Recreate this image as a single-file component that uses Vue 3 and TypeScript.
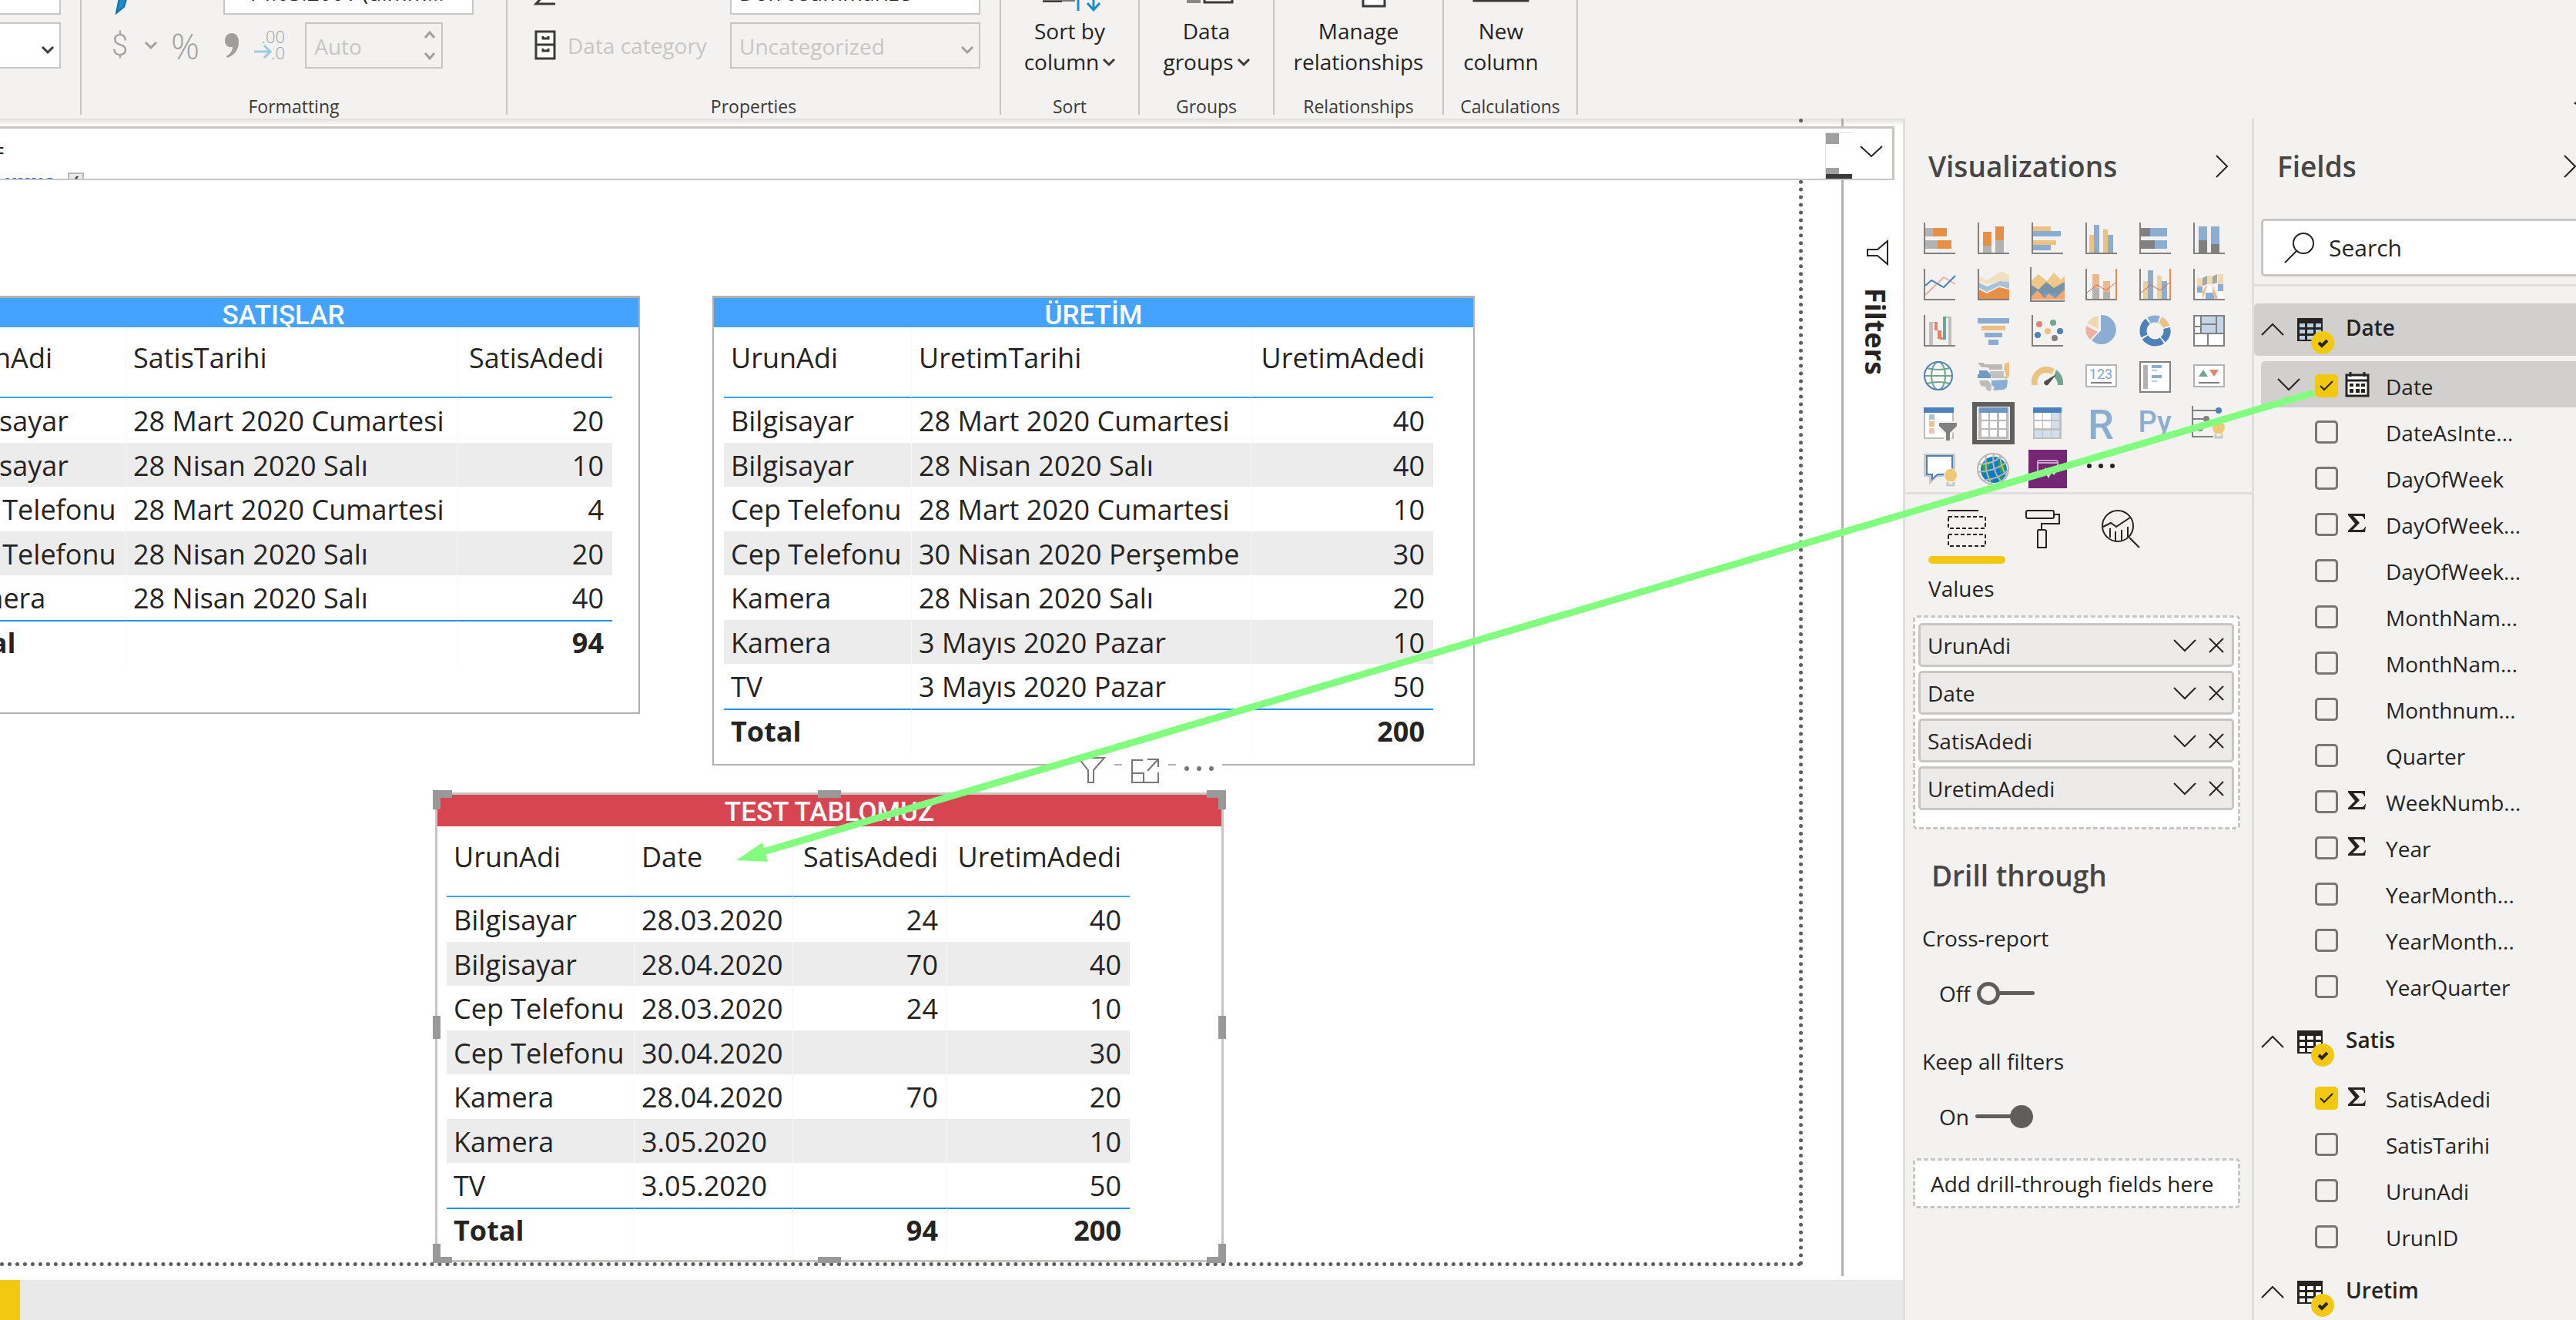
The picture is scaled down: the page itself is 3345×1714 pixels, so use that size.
<script setup lang="ts">
import { ref } from 'vue'

interface Visual {
  name: string
  art: string
  selected?: boolean
}
interface Field {
  name: string
  checked?: boolean
  sum?: boolean
  date?: boolean
}
interface FieldTable {
  name: string
  active?: boolean
  fields: Field[]
}
interface Card {
  id: string
  title: string
  tone: string
  selected?: boolean
  columns: { name: string; width: number; number?: boolean }[]
  rows: string[][]
  total: string[]
}

const axis = '<path d="M1 0V40H41" fill="none" stroke="#808080" stroke-width="2"/>'
const r = (x: number, y: number, w: number, h: number, c: string) =>
  `<rect x="${x}" y="${y}" width="${w}" height="${h}" fill="${c}"/>`
const p = (points: string, c: string) => `<polygon points="${points}" fill="${c}"/>`
const line = (points: string, c: string, w = 2) =>
  `<polyline points="${points}" fill="none" stroke="${c}" stroke-width="${w}"/>`
const dot = (x: number, y: number, c: string, radius = 4) =>
  `<circle cx="${x}" cy="${y}" r="${radius}" fill="${c}"/>`

const orange = '#e68f45'
const yellow = '#ebc282'
const blue = '#8badd2'
const deep = '#4c81b9'
const gray = '#b3b3b3'
const dark = '#808080'
const red = '#e0846e'
const green = '#72a591'

const arc = (from: number, to: number, c: string) => {
  const pt = (a: number, rad: number) => {
    const t = ((a - 90) * Math.PI) / 180
    return `${(20.5 + rad * Math.cos(t)).toFixed(1)} ${(20.5 + rad * Math.sin(t)).toFixed(1)}`
  }
  return `<path d="M${pt(from, 20)}A20 20 0 0 1 ${pt(to, 20)}L${pt(to, 11)}A11 11 0 0 0 ${pt(from, 11)}Z" fill="${c}"/>`
}
const bulb = (x: number, y: number) =>
  `<circle cx="${x}" cy="${y}" r="9" fill="#f3f2f1"/><path d="M${x - 8} ${y}a8 8 0 1 1 16 0c0 4-3 5-3 8h-10c0-3-3-4-3-8z" fill="#eec976"/><path d="M${x - 4} ${y + 9}v4h8v-4" fill="none" stroke="#c8c8c8" stroke-width="3"/>`

const visuals: Visual[] = [
  { name: 'Stacked bar chart', art: r(2, 7, 10, 11, gray) + r(12, 7, 18, 11, orange) + r(2, 23, 16, 11, gray) + r(18, 23, 18, 11, orange) + axis },
  { name: 'Stacked column chart', art: r(7, 12, 11, 18, orange) + r(7, 30, 11, 9, gray) + r(23, 5, 11, 18, orange) + r(23, 23, 11, 16, gray) + axis },
  { name: 'Clustered bar chart', art: r(2, 5, 23, 6, yellow) + r(2, 11, 36, 7, blue) + r(2, 23, 30, 6, yellow) + r(2, 29, 23, 7, blue) + axis },
  { name: 'Clustered column chart', art: r(5, 16, 6, 23, yellow) + r(11, 3, 7, 36, blue) + r(23, 9, 6, 30, yellow) + r(29, 16, 7, 23, blue) + axis },
  { name: '100% stacked bar chart', art: r(2, 7, 12, 11, dark) + r(14, 7, 22, 11, blue) + r(2, 23, 18, 11, dark) + r(20, 23, 16, 11, blue) + axis },
  { name: '100% stacked column chart', art: r(7, 5, 11, 18, blue) + r(7, 23, 11, 16, dark) + r(23, 5, 11, 23, blue) + r(23, 28, 11, 11, dark) + axis },
  { name: 'Line chart', art: line('2,34 26,11 41,20', '#ebafa2') + line('2,22 10,15 26,24 41,9', deep) + axis },
  { name: 'Area chart', art: p('2,10 12,15 31,3 41,8 41,18 31,16 12,20 2,16', '#f2dfc0') + p('2,18 12,23 29,16 41,17 41,26 29,22 12,30 2,25', '#a5c3d6') + p('2,27 12,32 28,24 41,27 41,39 2,39', orange) + axis },
  { name: 'Stacked area chart', art: p('0,15 9,7 20,16 29,5 38,14 43,9 43,30 0,30', '#f0c785') + p('0,21 9,27 19,17 29,25 43,17 43,38 0,38', '#7592ab') + p('14,32 34,32 29,38 20,38', '#739bc8') + p('0,40 0,36 8,28 17,38 22,32 31,38 43,27 43,40', '#f2a86c') + '<path d="M-1-2V42H43" fill="none" stroke="#808080" stroke-width="2"/>' },
  { name: 'Line and stacked column chart', art: r(9, 7, 9, 18, '#efb78e') + r(9, 25, 9, 14, gray) + r(23, 16, 9, 14, '#efb78e') + r(23, 30, 9, 9, gray) + line('2,31 15,21 27,28 39,18', '#dd6245', 1) + axis + r(39, 0, 2, 40, orange) },
  { name: 'Line and clustered column chart', art: r(5, 16, 6, 23, '#ebcf9c') + r(11, 2, 7, 37, blue) + r(23, 9, 6, 30, '#ebcf9c') + r(29, 16, 7, 23, blue) + line('2,31 15,21 27,28 39,18', '#dd6245', 1) + axis + r(39, 0, 2, 40, orange) },
  { name: 'Ribbon chart', art: r(5, 12, 7, 11, '#f2d9b0') + r(5, 23, 7, 8, blue) + r(5, 31, 7, 8, '#fff') + p('12,12 18,9 18,20 12,22', '#a6a6a6') + r(18, 9, 7, 11, '#f2d9b0') + r(18, 22, 7, 9, '#fff') + p('12,31 16,22 18,22 12,39', '#efb78e') + r(16, 31, 11, 8, blue) + p('25,22 31,36 31,39 28,39 25,30', '#efb78e') + p('25,10 31,7 31,18 25,20', '#a6a6a6') + r(32, 7, 7, 13, '#f2d9b0') + r(32, 20, 7, 9, blue) + r(32, 29, 7, 10, '#fff') + axis },
  { name: 'Waterfall chart', art: r(7, 9, 5, 30, '#c0c0c0') + r(12, 9, 2, 1, '#c0c0c0') + r(14, 9, 4, 11, red) + r(18, 20, 5, 11, red) + r(21, 29, 4, 3, red) + r(25, 2, 4, 30, green) + r(29, 2, 3, 2, '#c0c0c0') + r(32, 2, 4, 37, '#c0c0c0') + axis },
  { name: 'Funnel', art: r(0, 4, 41, 7, blue) + r(5, 14, 31, 6, yellow) + r(9, 23, 23, 6, blue) + r(14, 32, 13, 7, blue) },
  { name: 'Scatter chart', art: dot(10, 12, red) + dot(28, 10, green) + dot(8, 26, deep) + dot(21, 21, yellow) + dot(37, 21, deep) + dot(30, 30, dark) + axis },
  { name: 'Pie chart', art: `<path d="M20 0a19 19 0 1 1-12 33L20 20z" fill="${blue}"/><path d="M17 1v17L2 11A19 19 0 0 1 17 1z" fill="#efd9b2"/><path d="M1 14l15 8L6 32A19 19 0 0 1 1 14z" fill="#ebb1a3"/>` },
  { name: 'Donut chart', art: arc(-30, 18, blue) + arc(25, 70, yellow) + arc(77, 138, deep) + arc(145, 237, deep) + arc(244, 322, deep) },
  { name: 'Treemap', art: r(0, 0, 41, 41, '#fff') + r(10, 1, 30, 22, '#c4d5e8') + '<path d="M1 1H40V40H1zM10 1V23M1 15H10M10 12H30M30 1V23M1 24H40M19 24V40" fill="none" stroke="#808080" stroke-width="2"/>' },
  { name: 'Map', art: `<circle cx="19" cy="19" r="18" fill="#fff" fill-opacity=".5"/><g fill="none" stroke="${green}" stroke-width="2"><ellipse cx="19" cy="19" rx="9" ry="18"/><path d="M1 19H37M4 9q15 4 30 0M4 29q15-4 30 0"/></g><circle cx="19" cy="19" r="18" fill="none" stroke="${deep}" stroke-width="2"/>` },
  { name: 'Filled map', art: p('0,2 8,2 8,4 32,4 32,11 16,11 13,8 5,8', '#b9b9b9') + p('2,12 12,12 17,17 17,22 0,22 0,17 2,17', '#7299c6') + p('16,13 34,13 34,22 19,22 16,17', '#c0c0c0') + p('35,3 41,1 41,20 36,24 34,20 37,19 34,10', '#ebc282') + p('2,25 14,25 18,32 17,39 12,38 10,33 4,32', '#bdbdbd') + p('18,25 39,24 38,34 34,37 20,38 22,34 18,31', blue) },
  { name: 'Gauge', art: `<path d="M0 31A20 20 0 0 1 30 10l-4 7A12 12 0 0 0 8 31z" fill="${yellow}"/><path d="M32 11A22 22 0 0 1 41 31h-7q0-6-5-11z" fill="${green}"/><path d="M32 17L22 30a3 3 0 1 1-5-4z" fill="#4d4d4d"/>` },
  { name: 'Card', art: '<rect x="1" y="5" width="39" height="28" fill="#fff" stroke="#b3b3b3" stroke-width="2"/><text x="20" y="23" text-anchor="middle" font-size="18" fill="#7fa8d2">123</text>' + r(7, 27, 27, 2, dark) },
  { name: 'Multi-row card', art: '<rect x="1" y="1" width="39" height="39" fill="#fff" stroke="#808080" stroke-width="2"/>' + r(5, 5, 6, 31, gray) + r(16, 5, 13, 4, blue) + r(16, 11, 7, 2, '#c8c8c8') + r(16, 18, 13, 4, blue) + r(16, 25, 7, 2, '#c8c8c8') },
  { name: 'KPI', art: '<rect x="1" y="5" width="39" height="28" fill="#fff" stroke="#b3b3b3" stroke-width="2"/>' + p('7,20 13,11 19,20', green) + p('21,11 33,11 27,20', red) + r(7, 27, 27, 2, dark) },
  { name: 'Slicer', art: '<rect x="1" y="1" width="37" height="39" fill="#fff" stroke="#bdbdbd" stroke-width="2"/>' + r(0, 0, 39, 7, deep) + r(7, 9, 7, 7, '#a8c1dc') + r(7, 18, 7, 7, yellow) + r(7, 27, 7, 7, '#efc3b8') + p('18,18 46,18 46,24 36,35 36,44 26,44 26,35 18,26', '#f3f2f1') + p('20,20 43,20 43,24 34,33 34,43 29,43 29,33 20,24', dark) },
  { name: 'Table', selected: true, art: r(2, 0, 37, 41, '#b9b9b9') + r(2, 0, 37, 7, '#6f95c2') + [7, 18, 29].map((y) => [5, 16, 28].map((x) => r(x, y, 9, 9, '#fff')).join('')).join('') },
  { name: 'Matrix', art: r(2, 0, 37, 41, '#c0c0c0') + r(2, 0, 37, 7, deep) + [7, 18, 30].map((y, i) => [4, 15, 26].map((x, j) => r(x, y, 10, 9, i === 2 || j === 2 ? '#d2dfec' : '#fff')).join('')).join('') },
  { name: 'R script visual', art: `<text x="20" y="41" text-anchor="middle" font-size="54" font-weight="500" fill="${blue}">R</text>` },
  { name: 'Python visual', art: `<text x="20" y="32" text-anchor="middle" font-size="38" font-weight="500" fill="${blue}">Py</text>` },
  { name: 'Key influencers', art: '<path d="M-1-2V38H26M0 4H31M0 15H16M0 27H8" fill="none" stroke="#808080" stroke-width="2"/>' + dot(33, 4, deep) + dot(17, 15, dark) + dot(9, 27, dark) + bulb(33, 26) },
  { name: 'Q&A', art: '<path d="M2 2H39V28H17L9 36V28H2z" fill="#fff" stroke="#c8c8c8" stroke-width="4"/><path d="M4 3H37V27H18L11 33V27H4z" fill="#fff" stroke="#4c81b9" stroke-width="2"/>' + bulb(35, 28) },
  { name: 'ArcGIS Maps', art: '<circle cx="21" cy="21" r="17" fill="#0c79c9"/><path d="M6 15q8-9 11-4l-3 8-7 9zM27 8q10 4 9 14l-6 3-4-9zM14 27l7 9-8-1zM26 31l8-2-6 7z" fill="#2fa33f"/><g fill="none" stroke="#b5b5b5" stroke-width="2"><circle cx="20" cy="20" r="20"/><path d="M1 14Q20 14 31 3M1 24Q24 22 38 11M7 35Q28 33 40 21M11 2Q8 22 18 40M21 0Q17 20 31 37M29 2Q30 18 38 30"/></g>' },
  { name: 'Power Apps', art: r(-4, -5, 50, 50, '#742774') + '<path d="M8 24V11Q8 9 10 9H32Q34 9 34 11V22M8 12H34" fill="none" stroke="#c9a3c9" stroke-width="2"/><path d="M14 28l4-7 4 8 4-8 4 6" fill="none" stroke="#ead5ea" stroke-width="3"/>' },
  { name: 'Get more visuals', art: dot(5, 16, '#252423', 3) + dot(20, 16, '#252423', 3) + dot(35, 16, '#252423', 3) },
]

const wells = ref(['UrunAdi', 'Date', 'SatisAdedi', 'UretimAdedi'])
const crossReport = ref(false)
const keepFilters = ref(true)

const tables = ref<FieldTable[]>([
  {
    name: 'Date',
    active: true,
    fields: [
      { name: 'Date', checked: true, date: true },
      { name: 'DateAsInte...' },
      { name: 'DayOfWeek' },
      { name: 'DayOfWeek...', sum: true },
      { name: 'DayOfWeek...' },
      { name: 'MonthNam...' },
      { name: 'MonthNam...' },
      { name: 'Monthnum...' },
      { name: 'Quarter' },
      { name: 'WeekNumb...', sum: true },
      { name: 'Year', sum: true },
      { name: 'YearMonth...' },
      { name: 'YearMonth...' },
      { name: 'YearQuarter' },
    ],
  },
  {
    name: 'Satis',
    fields: [{ name: 'SatisAdedi', checked: true, sum: true }, { name: 'SatisTarihi' }, { name: 'UrunAdi' }, { name: 'UrunID' }],
  },
  { name: 'Uretim', fields: [] },
])

const cards: Card[] = [
  {
    id: 'satis',
    title: 'SATIŞLAR',
    tone: 'blue',
    columns: [
      { name: 'UrunAdi', width: 244 },
      { name: 'SatisTarihi', width: 431 },
      { name: 'SatisAdedi', width: 200, number: true },
    ],
    rows: [
      ['Bilgisayar', '28 Mart 2020 Cumartesi', '20'],
      ['Bilgisayar', '28 Nisan 2020 Salı', '10'],
      ['Cep Telefonu', '28 Mart 2020 Cumartesi', '4'],
      ['Cep Telefonu', '28 Nisan 2020 Salı', '20'],
      ['Kamera', '28 Nisan 2020 Salı', '40'],
    ],
    total: ['Total', '', '94'],
  },
  {
    id: 'uretim',
    title: 'ÜRETİM',
    tone: 'blue',
    columns: [
      { name: 'UrunAdi', width: 244 },
      { name: 'UretimTarihi', width: 441 },
      { name: 'UretimAdedi', width: 236, number: true },
    ],
    rows: [
      ['Bilgisayar', '28 Mart 2020 Cumartesi', '40'],
      ['Bilgisayar', '28 Nisan 2020 Salı', '40'],
      ['Cep Telefonu', '28 Mart 2020 Cumartesi', '10'],
      ['Cep Telefonu', '30 Nisan 2020 Perşembe', '30'],
      ['Kamera', '28 Nisan 2020 Salı', '20'],
      ['Kamera', '3 Mayıs 2020 Pazar', '10'],
      ['TV', '3 Mayıs 2020 Pazar', '50'],
    ],
    total: ['Total', '', '200'],
  },
  {
    id: 'test',
    title: 'TEST TABLOMUZ',
    tone: 'red',
    selected: true,
    columns: [
      { name: 'UrunAdi', width: 244 },
      { name: 'Date', width: 206 },
      { name: 'SatisAdedi', width: 200, number: true },
      { name: 'UretimAdedi', width: 237, number: true },
    ],
    rows: [
      ['Bilgisayar', '28.03.2020', '24', '40'],
      ['Bilgisayar', '28.04.2020', '70', '40'],
      ['Cep Telefonu', '28.03.2020', '24', '10'],
      ['Cep Telefonu', '30.04.2020', '', '30'],
      ['Kamera', '28.04.2020', '70', '20'],
      ['Kamera', '3.05.2020', '', '10'],
      ['TV', '3.05.2020', '', '50'],
    ],
    total: ['Total', '', '94', '200'],
  },
]
const handles = ['tl', 'tm', 'tr', 'ml', 'mr', 'bl', 'bm', 'br']
</script>

<template>
  <div class="app">
    <header class="ribbon">
      <section class="group structure">
        <div class="controls">
          <div class="pick"><select aria-label="Name"><option></option></select></div>
          <div class="pick">
            <select aria-label="Data type"><option></option></select>
            <svg class="caret" viewBox="0 0 16 10"><path d="M1 1l7 7 7-7" /></svg>
          </div>
        </div>
      </section>

      <section class="group formatting">
        <div class="controls">
          <div class="row">
            <svg class="brush" viewBox="0 0 26 60"><path d="M6 58L10 38 22 30 16 50Z" fill="#1e8bcd" stroke="#126fa8" stroke-width="2" /></svg>
            <label class="cap format-cap" for="format">Format</label>
            <div class="pick"><select id="format"><option>14.03.2001 (d.mm...</option></select></div>
          </div>
          <div class="row">
            <button class="glyph money" disabled>
              $<svg class="caret-sm" viewBox="0 0 16 10"><path d="M1 1l7 7 7-7" /></svg>
            </button>
            <button class="glyph percent" disabled>%</button>
            <button class="glyph comma" disabled aria-label="Thousands separator">
              <svg viewBox="0 0 20 34"><path d="M10 1c6 0 9 5 9 12 0 10-6 17-15 20l-1-2c5-3 8-7 8-12C4 20 1 16 1 10 1 5 5 1 10 1z" fill="#a19f9d" /></svg>
            </button>
            <button class="glyph decimals" disabled aria-label="Decimal places">
              <svg viewBox="0 0 40 42">
                <text x="40" y="18" text-anchor="end" font-size="22" fill="#a19f9d">.00</text>
                <text x="40" y="39" text-anchor="end" font-size="22" fill="#a19f9d">.0</text>
                <path d="M0 29H20M13 21l8 8-8 8" fill="none" stroke="#9ccae3" stroke-width="3" />
              </svg>
            </button>
            <div class="stepper">
              <input type="text" value="Auto" disabled aria-label="Decimals" />
              <svg viewBox="0 0 16 38"><path d="M2 9l6-7 6 7M2 29l6 7 6-7" /></svg>
            </div>
          </div>
        </div>
        <h2>Formatting</h2>
      </section>

      <section class="group properties">
        <div class="controls">
          <div class="row">
            <svg class="prop-icon" viewBox="0 0 28 60"><path d="M26 17H3l11 16L2 46H27" fill="#fff" stroke="#3b3a39" stroke-width="3" /></svg>
            <label class="cap" for="summary">Summarization</label>
            <div class="pick"><select id="summary"><option>Don't summarize</option></select></div>
          </div>
          <div class="row">
            <svg class="prop-icon" viewBox="0 0 28 60"><path d="M2 12H26V47H2zM2 29H26" fill="#fff" stroke="#3b3a39" stroke-width="3" /><path d="M11 18v3h7v-3M11 34v3h7v-3" fill="none" stroke="#3b3a39" stroke-width="3" /></svg>
            <label class="cap off" for="category">Data category</label>
            <div class="pick">
              <select id="category" disabled><option>Uncategorized</option></select>
              <svg class="caret" viewBox="0 0 16 10"><path d="M1 1l7 7 7-7" /></svg>
            </div>
          </div>
        </div>
        <h2>Properties</h2>
      </section>

      <section class="group sort">
        <button class="big">
          <svg viewBox="0 0 80 80"><path d="M5 0H47V66H5z" fill="#797775" /><path d="M5 66H30" stroke="#3b3a39" stroke-width="2" /><path d="M51 20V78M71 20V76M63 68l8 9 8-9" fill="none" stroke="#1e8bcd" stroke-width="3" /></svg>
          <span>Sort by<br />column<svg class="caret-lg" viewBox="0 0 16 10"><path d="M1 1l7 7 7-7" /></svg></span>
        </button>
        <h2>Sort</h2>
      </section>
      <section class="group groups">
        <button class="big">
          <svg viewBox="0 0 80 80"><path d="M15 30H33V68H15z" fill="#8a8886" /><path d="M38 30H74V67H38z" fill="#fff" stroke="#3b3a39" stroke-width="3" /></svg>
          <span>Data<br />groups<svg class="caret-lg" viewBox="0 0 16 10"><path d="M1 1l7 7 7-7" /></svg></span>
        </button>
        <h2>Groups</h2>
      </section>
      <section class="group relations">
        <button class="big">
          <svg viewBox="0 0 80 80"><path d="M46 40H74V72H46z" fill="#fff" stroke="#3b3a39" stroke-width="3" /></svg>
          <span>Manage<br />relationships</span>
        </button>
        <h2>Relationships</h2>
      </section>
      <section class="group calc">
        <button class="big">
          <svg viewBox="0 0 80 80"><path d="M5 20H75V65H5z" fill="#fff" stroke="#3b3a39" stroke-width="3" /></svg>
          <span>New<br />column</span>
        </button>
        <h2>Calculations</h2>
      </section>
      <svg class="ribbon-more" viewBox="0 0 3 6"><path d="M3 1L0 3l3 2z" fill="#252423" /></svg>
    </header>

    <div class="body">
      <main class="report">
        <div class="workspace">
          <div class="canvas">
            <article v-for="card in cards" :key="card.id" class="card" :class="[card.id, card.tone, { selected: card.selected }]">
              <h3>{{ card.title }}</h3>
              <table>
                <colgroup>
                  <col v-for="c in card.columns" :key="c.name" :style="{ width: c.width + 'px' }" />
                </colgroup>
                <thead>
                  <tr><th v-for="c in card.columns" :key="c.name" :class="{ num: c.number }">{{ c.name }}</th></tr>
                </thead>
                <tbody>
                  <tr v-for="(row, i) in card.rows" :key="i">
                    <td v-for="(cell, j) in row" :key="j" :class="{ num: card.columns[j].number }">{{ cell }}</td>
                  </tr>
                </tbody>
                <tfoot>
                  <tr><td v-for="(cell, j) in card.total" :key="j" :class="{ num: card.columns[j].number }">{{ cell }}</td></tr>
                </tfoot>
              </table>
              <template v-if="card.selected">
                <i v-for="h in handles" :key="h" class="handle" :class="h"></i>
                <div class="tools">
                  <button aria-label="Filters"><svg viewBox="0 0 36 34"><path d="M1 1H35L21 17V33H14V17Z" /></svg></button>
                  <button aria-label="Focus mode"><svg viewBox="0 0 36 34"><path d="M15 4H1V33H35V20M1 21H16V33M21 3H35V13M34 4L21 18" /></svg></button>
                  <button aria-label="More options"><svg viewBox="0 0 36 34"><g class="fill"><circle cx="2" cy="15" r="3" /><circle cx="18" cy="15" r="3" /><circle cx="34" cy="15" r="3" /></g></svg></button>
                </div>
              </template>
            </article>
          </div>
          <aside class="filters">
            <svg viewBox="0 0 30 32"><path d="M28 1V31L15 20H2V12H15Z" /></svg>
            <h2>Filters</h2>
          </aside>
        </div>
        <footer class="pages"><span class="page-mark"></span></footer>

        <div class="formula">
          <pre><code>Date =
<b>ADDCOLUMNS</b> <i>(</i></code></pre>
          <div class="minimap"><i></i><i></i></div>
          <button aria-label="Expand formula bar"><svg viewBox="0 0 30 16"><path d="M1 1l14 13L29 1" /></svg></button>
        </div>
      </main>

      <aside class="viz">
        <div class="pane-head">
          <h2>Visualizations</h2>
          <button aria-label="Collapse Visualizations"><svg viewBox="0 0 16 30"><path d="M1 1l14 14L1 29" /></svg></button>
        </div>
        <div class="gallery">
          <button v-for="v in visuals" :key="v.name" :aria-label="v.name" :class="{ on: v.selected }">
            <svg viewBox="0 0 41 41" v-html="v.art"></svg>
          </button>
        </div>
        <nav class="tabs">
          <button class="on" aria-label="Fields"><svg viewBox="0 0 50 50"><path d="M0 1H40" /><path d="M1 9H49V24H1ZM1 32H49V47H1Z" stroke-dasharray="5 3" /></svg></button>
          <button aria-label="Format"><svg viewBox="0 0 50 50"><path d="M4 1H36Q38 1 38 3V9Q38 11 36 11H4Q2 11 2 9V3Q2 1 4 1ZM38 6H45V18H22V26M18 26H26Q28 26 28 28V49H17V28Q17 26 18 26Z" /></svg></button>
          <button aria-label="Analytics"><svg viewBox="0 0 50 50"><circle cx="21" cy="21" r="20" /><path d="M2 22L12 17 19 22 37 10M11 24V36M18 28V40M26 26V40M34 22V35M36 36L49 49" /></svg></button>
        </nav>

        <h3 class="well-name">Values</h3>
        <div class="well">
          <div v-for="w in wells" :key="w" class="chip">
            <span>{{ w }}</span>
            <button :aria-label="'Options for ' + w"><svg class="down" viewBox="0 0 30 16"><path d="M1 1l14 14L29 1" /></svg></button>
            <button :aria-label="'Remove ' + w"><svg class="cross" viewBox="0 0 20 20"><path d="M1 1l18 18M19 1L1 19" /></svg></button>
          </div>
        </div>

        <h2 class="drill">Drill through</h2>
        <label class="switch-name" for="cross">Cross-report</label>
        <div class="switch"><span>{{ crossReport ? 'On' : 'Off' }}</span><input id="cross" v-model="crossReport" type="checkbox" role="switch" /></div>
        <label class="switch-name keep" for="keep">Keep all filters</label>
        <div class="switch"><span>{{ keepFilters ? 'On' : 'Off' }}</span><input id="keep" v-model="keepFilters" type="checkbox" role="switch" /></div>
        <div class="drop">Add drill-through fields here</div>
      </aside>

      <aside class="fields">
        <div class="pane-head">
          <h2>Fields</h2>
          <button aria-label="Collapse Fields"><svg viewBox="0 0 16 30"><path d="M1 1l14 14L1 29" /></svg></button>
        </div>
        <div class="search">
          <svg viewBox="0 0 40 40"><circle cx="25" cy="14" r="13" /><path d="M16 24L1 39" /></svg>
          <input type="search" placeholder="Search" aria-label="Search" />
        </div>
        <section v-for="t in tables" :key="t.name" class="ftable" :class="{ active: t.active }">
          <button class="fhead">
            <svg class="fold" viewBox="0 0 30 16"><path d="M1 15L15 1l14 14" /></svg>
            <svg class="ticon" viewBox="0 0 48 48">
              <path d="M0 0H33V30H0z" fill="#252423" />
              <path class="cells" d="M3 7h7v5H3zM13 7h8v5h-8zM24 7h7v5h-7zM3 15h7v5H3zM13 15h8v5h-8zM24 15h7v5h-7zM3 23h7v5H3zM13 23h8v5h-8zM24 23h7v5h-7z" />
              <circle cx="33" cy="32" r="15" fill="#f2c811" />
              <path d="M28 32l4 4 7-7" fill="none" stroke="#252423" stroke-width="4" />
            </svg>
            <span>{{ t.name }}</span>
          </button>
          <label v-for="(f, i) in t.fields" :key="i" class="field" :class="{ hot: f.date }">
            <span class="unfold"><svg v-if="f.date" viewBox="0 0 30 16"><path d="M1 1l14 14L29 1" /></svg></span>
            <span class="tick">
              <input v-model="f.checked" type="checkbox" />
              <svg v-if="f.checked" viewBox="0 0 30 30"><path d="M7 15l5 5L23 9" /></svg>
            </span>
            <span class="kind">
              <svg v-if="f.sum" viewBox="0 0 30 32"><path d="M3 4H25V11H24Q23 7 20 7H10L18 16 9 25H20Q24 25 25 21H26L25 28H3V26L12 17 3 6Z" fill="#252423" /></svg>
              <svg v-if="f.date" viewBox="0 0 30 32"><path d="M1 4H29V31H1z" fill="#fff" stroke="#252423" stroke-width="3" /><path d="M0 11H30M6 0V6M24 0V6" stroke="#252423" stroke-width="3" /><path d="M5 15h5v4H5zM13 15h5v4h-5zM20 15h5v4h-5zM5 22h5v5H5zM13 22h5v5h-5zM20 22h5v5h-5z" fill="#252423" /></svg>
            </span>
            <span>{{ f.name }}</span>
          </label>
        </section>
      </aside>
    </div>

    <svg class="arrow" viewBox="0 0 2060 620" aria-hidden="true">
      <path d="M2051 6L38 602" />
      <polygon points="6,612 40,589 47,614" />
    </svg>
  </div>
</template>

<style>
body {
  overflow: hidden;
}
</style>

<style scoped>
.app {
  position: relative;
  display: flex;
  flex-direction: column;
  min-height: 100vh;
  overflow: hidden;
  background: #f3f2f1;
  color: #252423;
  font-family: 'Open Sans', 'Noto Sans', sans-serif;
  font-size: 28px;
}
.app *,
.app *::before,
.app *::after {
  box-sizing: border-box;
}
h2,
h3,
pre {
  margin: 0;
  font-weight: 400;
}
button {
  padding: 0;
  border: 0;
  background: none;
  color: inherit;
  font: inherit;
}
svg {
  display: block;
  flex: none;
  overflow: visible;
}

/* Ribbon */
.ribbon {
  display: flex;
  height: 154px;
}
.group {
  display: flex;
  flex: none;
  flex-direction: column;
  align-items: center;
  justify-content: flex-end;
  height: 149px;
  border-right: 2px solid #c8c6c4;
}
.group h2 {
  font-size: 23px;
  line-height: 22px;
  color: #3b3a39;
}
.structure { width: 106px; align-items: flex-end; padding: 0 25px 22px 0; }
.formatting { width: 553px; }
.properties { width: 641px; }
.sort { width: 180px; }
.groups { width: 175px; }
.relations { width: 220px; }
.calc { width: 174px; }
.controls {
  display: flex;
  flex-direction: column;
  gap: 10px;
  width: 100%;
  margin-bottom: 38px;
}
.structure .controls { width: 160px; }
.formatting .controls { padding-left: 39px; }
.properties .controls { padding-left: 35px; }
.row {
  display: flex;
  align-items: center;
  height: 60px;
}
.pick {
  position: relative;
  flex: none;
  width: 325px;
}
.structure .pick { width: 100%; }
select,
.stepper input {
  display: block;
  width: 100%;
  height: 60px;
  padding: 2px 10px 0;
  border: 2px solid #c8c6c4;
  border-radius: 0;
  background: #fff;
  color: #252423;
  font: inherit;
  appearance: none;
}
#format { padding-left: 28px; }
select:disabled,
.stepper input:disabled {
  background: #f3f2f1;
  color: #c8c6c4;
  opacity: 1;
}
.caret {
  position: absolute;
  top: 31px;
  right: 9px;
  width: 16px;
  height: 10px;
}
.caret path,
.caret-lg path { fill: none; stroke: #3b3a39; stroke-width: 3; }
select:disabled + .caret path,
.caret-sm path { fill: none; stroke: #a19f9d; stroke-width: 3; }
.brush { width: 26px; height: 60px; margin-right: 15px; }
.cap { width: 211px; }
.cap.off { color: #c8c6c4; }
.format-cap { width: 104px; }
.prop-icon { width: 28px; height: 60px; margin-right: 15px; }
.glyph {
  display: flex;
  align-items: center;
  height: 60px;
  color: #a19f9d;
  font-weight: 300;
}
.money { gap: 22px; margin-right: 18px; font-family: Roboto, sans-serif; font-size: 38px; }
.percent { margin-right: 32px; font-size: 46px; }
.comma { margin-right: 19px; }
.comma svg { width: 20px; height: 34px; }
.decimals { margin-right: 26px; }
.decimals svg { width: 40px; height: 42px; }
.caret-sm { width: 16px; height: 10px; }
.stepper { position: relative; width: 179px; }
.stepper svg { position: absolute; top: 11px; right: 9px; width: 16px; height: 38px; }
.stepper path { fill: none; stroke: #a19f9d; stroke-width: 3; }
.big {
  display: flex;
  flex-direction: column;
  align-items: center;
  gap: 4px;
  margin-bottom: 27px;
  line-height: 40px;
}
.big > svg { width: 80px; height: 80px; }
.calc .big { margin-right: 24px; }
.caret-lg {
  display: inline-block;
  width: 16px;
  height: 10px;
  margin: 0 0 5px 5px;
}
.ribbon-more { width: 3px; height: 6px; margin: 131px 0 0 auto; }

/* Report area */
.body {
  display: flex;
  flex: 1;
}
.report {
  position: relative;
  display: flex;
  flex: 1;
  flex-direction: column;
  min-width: 0;
  background: linear-gradient(#e1dfdd, #fff 10px);
}
.workspace {
  display: flex;
  flex: 1;
}
.canvas {
  position: relative;
  flex: 1;
  margin: 0 50px 18px 0;
  border: 0 dotted #605e5c;
  border-width: 0 5px 5px 0;
}
.filters {
  display: flex;
  flex-direction: column;
  align-items: center;
  gap: 30px;
  width: 80px;
  margin-bottom: 5px;
  padding: 158px 0 0 10px;
  border-left: 3px solid #b3b0ad;
}
.filters svg { width: 30px; height: 32px; }
.filters path { fill: none; stroke: #252423; stroke-width: 2; }
.filters h2 {
  margin-right: 6px;
  font-size: 36px;
  font-weight: 700;
  line-height: 44px;
  writing-mode: vertical-rl;
}
.pages {
  height: 52px;
  background: #e9e9e9;
}
.page-mark {
  display: block;
  width: 26px;
  height: 100%;
  background: #f2c811;
}
.formula {
  position: absolute;
  top: 10px;
  right: 11px;
  left: 0;
  display: flex;
  height: 70px;
  overflow: hidden;
  border: 3px solid #c8c6c4;
  border-width: 3px 3px 2px 0;
  background: #fff;
}
.formula pre {
  flex: 1;
  margin: 8px 0 0 -95px;
  font-size: 28px;
  line-height: 42px;
}
.formula code { font-family: 'Liberation Mono', monospace; }
.formula b { color: #3165bb; font-weight: 700; }
.formula i {
  outline: 2px solid #b9b9b9;
  background: #e4ede4;
  font-style: normal;
}
.minimap {
  display: flex;
  flex-direction: column;
  justify-content: space-between;
  width: 35px;
  margin: 5px 10px 0 0;
  border-top: 1px solid #e1dfdd;
  border-left: 1px solid #e1dfdd;
}
.minimap i {
  width: 17px;
  height: 14px;
  outline: 0;
  background: #a0a0a0;
}
.minimap i + i {
  width: 34px;
  border-bottom: 6px solid #3b3a39;
  background: linear-gradient(90deg, #a0a0a0 50%, #fff 50%);
}
.formula button { width: 42px; }
.formula svg { width: 30px; height: 16px; margin: -6px 0 0; }
.formula path { fill: none; stroke: #252423; stroke-width: 2; }

/* Table visuals */
.card {
  position: absolute;
  border: 2px solid #b3b0ad;
  border-top-width: 3px;
  background: #fff;
}
.card.satis { top: 230px; left: -95px; width: 926px; height: 543px; }
.card.uretim { top: 230px; left: 925px; width: 990px; height: 610px; }
.card.test { top: 875px; left: 565px; width: 1024px; height: 610px; }
.card.selected { border: 3px solid #c8c6c4; }
.card h3 {
  padding-top: 8px;
  background: #43a3ff;
  color: #fff;
  font-family: Roboto, sans-serif;
  font-size: 35px;
  font-weight: 500;
  line-height: 30px;
  text-align: center;
}
.card.red h3 { padding-bottom: 3px; background: #d64550; }
table {
  margin-left: 13px;
  border-spacing: 0;
  font-size: 36px;
  table-layout: fixed;
  width: 0;
}
.selected table { margin-left: 12px; }
th,
td {
  padding: 2px 11px 0 9px;
  border-right: 1px solid #f7f7f7;
  line-height: 56px;
  text-align: left;
  white-space: nowrap;
}
th {
  padding: 15px 11px 25px 9px;
  border-bottom: 2px solid #3a9efa;
  font-weight: 400;
  line-height: 50px;
}
th:last-child,
td:last-child { border-right: 0; }
tbody tr:nth-child(even) td { background: #ececec; line-height: 55px; }
tfoot td { padding-top: 0; border-top: 2px solid #2090ff; font-weight: 700; }
.num { text-align: right; }
.handle {
  position: absolute;
  width: 25px;
  height: 25px;
  border: 0 solid #999;
}
.tl { top: -6px; left: -6px; border-width: 10px 0 0 10px; }
.tr { top: -6px; right: -6px; border-width: 10px 10px 0 0; }
.bl { bottom: -4px; left: -6px; border-width: 0 0 8px 10px; }
.br { right: -6px; bottom: -4px; border-width: 0 10px 8px 0; }
.tm,
.bm { left: 50%; width: 30px; height: 10px; margin-left: -15px; background: #999; }
.ml,
.mr { top: 50%; width: 10px; height: 30px; margin-top: -15px; background: #999; }
.tm { top: -6px; }
.bm { bottom: -4px; height: 8px; }
.ml { left: -6px; }
.mr { right: -6px; }
.tools {
  position: absolute;
  top: -56px;
  right: -1px;
  display: flex;
  gap: 10px;
}
.tools button {
  display: flex;
  align-items: center;
  justify-content: center;
  width: 60px;
  height: 48px;
  background: #fff;
}
.tools svg { width: 36px; height: 34px; }
.tools path { fill: none; stroke: #797775; stroke-width: 2; }
.tools .fill { fill: #797775; }

/* Panes */
.viz {
  flex: none;
  width: 453px;
  border-left: 3px solid #e1dfdd;
}
.fields {
  flex: none;
  width: 421px;
  overflow: hidden;
  border-left: 3px solid #e1dfdd;
}
.pane-head {
  display: flex;
  align-items: center;
  justify-content: space-between;
  padding: 35px 31px 0 30px;
}
.fields .pane-head { padding-right: 0; }
.pane-head h2,
.drill {
  color: #484644;
  font-size: 37px;
  font-weight: 600;
  line-height: 54px;
}
.pane-head svg { width: 16px; height: 30px; }
.pane-head path,
.chip path,
.fold path,
.unfold path { fill: none; stroke: #252423; stroke-width: 2; }
.gallery {
  display: grid;
  grid-template-columns: repeat(6, 41px);
  gap: 19px 29px;
  padding: 46px 0 9px 24px;
  border-bottom: 3px solid #e1dfdd;
  font-family: Roboto, sans-serif;
}
.gallery button,
.gallery svg { width: 41px; height: 41px; }
.gallery .on {
  outline: 6px solid #605e5c;
  outline-offset: 1px;
  background: #d2d0ce;
}
.tabs {
  display: flex;
  padding: 20px 0 0 30px;
}
.tabs button {
  display: flex;
  justify-content: center;
  width: 100px;
  height: 70px;
}
.tabs .on {
  position: relative;
}
.tabs .on::after {
  position: absolute;
  right: 0;
  bottom: 0;
  left: 0;
  height: 10px;
  border-radius: 5px;
  background: #f2c811;
  content: '';
}
.tabs svg { width: 50px; height: 50px; }
.tabs path,
.tabs circle { fill: none; stroke: #252423; stroke-width: 2; }
.well-name {
  margin: 12px 0 15px 30px;
  font-size: 28px;
  line-height: 40px;
}
.well {
  display: flex;
  flex-direction: column;
  gap: 5px;
  height: 278px;
  margin: 0 15px 0 10px;
  padding: 7px 5px 0 4px;
  border: 3px dashed #c8c6c4;
  border-radius: 5px;
  background: #fff;
}
.chip {
  display: flex;
  align-items: center;
  gap: 16px;
  height: 57px;
  padding: 0 10px 0 9px;
  border: 3px solid #c8c6c4;
  border-radius: 5px;
  background: #edebe9;
}
.chip span { flex: 1; line-height: 40px; }
.down { width: 30px; height: 16px; }
.cross { width: 20px; height: 20px; }
.drill { margin: 33px 0 34px 34px; }
.switch-name {
  display: block;
  margin-left: 22px;
  line-height: 40px;
}
.switch-name.keep { margin-top: 48px; }
.switch {
  display: flex;
  align-items: center;
  gap: 8px;
  height: 40px;
  margin: 32px 0 0 44px;
}
.switch input {
  position: relative;
  width: 75px;
  height: 30px;
  margin: 0;
  appearance: none;
}
.switch input::before,
.switch input::after {
  position: absolute;
  background: #605e5c;
  content: '';
}
.switch input::before {
  top: 12px;
  left: 0;
  width: 75px;
  height: 5px;
  border-radius: 3px;
}
.switch input::after {
  top: 0;
  left: 0;
  width: 30px;
  height: 30px;
  border: 5px solid #605e5c;
  border-radius: 50%;
  background: #f3f2f1;
}
.switch input:checked::after { left: 45px; background: #605e5c; }
.drop {
  height: 65px;
  margin: 34px 15px 0 10px;
  padding-left: 20px;
  border: 3px dashed #c8c6c4;
  border-radius: 5px;
  background: #fff;
  line-height: 60px;
  white-space: nowrap;
}

/* Fields list */
.search {
  display: flex;
  align-items: center;
  gap: 18px;
  height: 75px;
  margin: 41px -10px 10px 9px;
  padding-left: 27px;
  border: 3px solid #c8c6c4;
  border-radius: 5px;
  background: #fff;
}
.search svg { width: 40px; height: 40px; }
.search circle,
.search path { fill: none; stroke: #252423; stroke-width: 2; }
.search input {
  flex: 1;
  min-width: 0;
  padding: 0;
  border: 0;
  background: none;
  color: #252423;
  font: inherit;
  font-size: 30px;
}
.search input::placeholder { color: #252423; opacity: 1; }
.search + .ftable {
  padding-top: 22px;
  border-top: 3px solid #e1dfdd;
}
.ftable { padding-top: 10px; }
.fhead {
  display: flex;
  align-items: flex-start;
  width: 100%;
  height: 68px;
  margin-bottom: 7px;
  padding: 19px 0 0 9px;
  border-radius: 5px 0 0 5px;
  font-weight: 600;
}
.fhead:last-child { margin-bottom: 0; }
.active .fhead { background: #d2d0ce; }
.fold { width: 30px; height: 16px; margin: 7px 17px 0 0; }
.ticon { width: 48px; height: 48px; }
.cells { fill: #fff; }
.active .cells { fill: #b9cfe6; }
.fhead span { margin-left: 15px; line-height: 24px; }
.field {
  display: flex;
  align-items: center;
  height: 60px;
  margin-left: 9px;
  line-height: 60px;
  white-space: nowrap;
}
.field.hot {
  border-radius: 5px 0 0;
  background: #d2d0ce;
}
.unfold {
  width: 70px;
  padding-left: 21px;
}
.unfold svg { width: 30px; height: 16px; }
.tick {
  position: relative;
  width: 30px;
  height: 30px;
  margin: 4px 10px 0 0;
}
.tick input {
  display: block;
  width: 30px;
  height: 30px;
  margin: 0;
  border: 3px solid #797775;
  border-radius: 5px;
  appearance: none;
}
.tick input:checked { border-color: #f2c811; background: #f2c811; }
.tick svg { position: absolute; inset: 0; pointer-events: none; }
.tick path { fill: none; stroke: #252423; stroke-width: 2; }
.kind { width: 52px; }
.kind svg { width: 30px; height: 32px; }
.field > span:last-child { padding-top: 5px; }

.arrow {
  position: absolute;
  top: 505px;
  left: 950px;
  width: 2060px;
  height: 620px;
  pointer-events: none;
}
.arrow path { fill: none; stroke: #82ff7f; stroke-width: 9; stroke-linecap: round; }
.arrow polygon { fill: #82ff7f; }
</style>
